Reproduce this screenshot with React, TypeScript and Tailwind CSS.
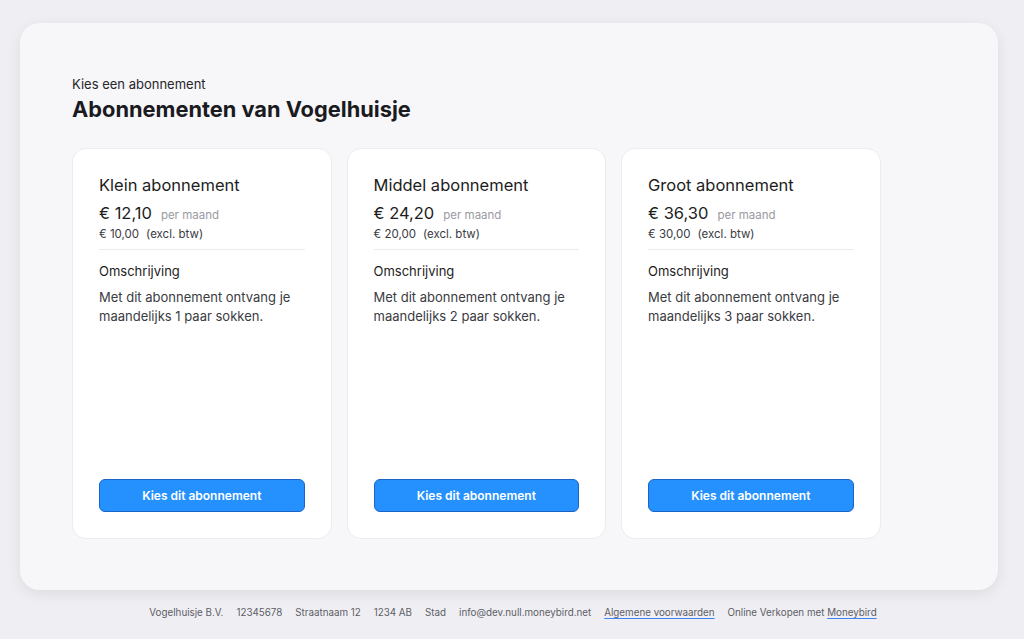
const plans = [
  { name: 'Klein abonnement', price: '€ 12,10', excl: '€ 10,00', count: 1 },
  { name: 'Middel abonnement', price: '€ 24,20', excl: '€ 20,00', count: 2 },
  { name: 'Groot abonnement', price: '€ 36,30', excl: '€ 30,00', count: 3 },
];

const PlanCard = ({ plan }: { plan: (typeof plans)[number] }) => (
  <div className="flex h-[391px] w-[259.5px] flex-col rounded-[14px] border border-[#ececf0] bg-white px-[26px] pt-[25px] pb-[26px]">
    <h3 className="text-[16.5px] leading-[22px] text-[#1d1d22]">{plan.name}</h3>
    <div className="mt-[6px] flex items-baseline gap-[9px]">
      <span className="text-[16.5px] leading-[22px] text-[#1d1d22]">{plan.price}</span>
      <span className="text-[11.5px] text-[#9a9aa2]">per maand</span>
    </div>
    <p className="mt-[2px] text-[11.5px] leading-[16px] text-[#3b3b42]">
      {plan.excl}
      <span className="ml-[7px]">(excl. btw)</span>
    </p>
    <div className="mt-[7px] border-t border-[#ececf0]" />
    <h4 className="mt-[12px] text-[13px] leading-[18px] text-[#1d1d22]">Omschrijving</h4>
    <p className="mt-[8px] text-[13px] leading-[19px] text-[#3b3b42]">
      Met dit abonnement ontvang je maandelijks {plan.count} paar sokken.
    </p>
    <button className="mt-auto h-[33px] w-full rounded-[6px] border border-[#1b63c6] bg-[#2491ff] text-[12px] font-semibold text-white">
      Kies dit abonnement
    </button>
  </div>
);

export default function App() {
  return (
    <div
      className="flex min-h-[639px] flex-col bg-[#efeff3] pt-[23px]"
      style={{ fontFamily: 'Inter, "Noto Sans", sans-serif' }}
    >
      <div className="ml-[20px] h-[567px] w-[978px] rounded-[20px] bg-[#f7f7f9] px-[52px] pt-[53px] shadow-[0_4px_14px_rgba(0,0,0,0.08)]">
        <p className="text-[13px] leading-[16px] text-[#26262b]">Kies een abonnement</p>
        <h1 className="mt-[3px] text-[21.8px] font-bold leading-[28px] text-[#1a1a1f]">
          Abonnementen van Vogelhuisje
        </h1>
        <div className="mt-[25px] flex gap-[15px]">
          {plans.map(p => (
            <PlanCard key={p.name} plan={p} />
          ))}
        </div>
      </div>

      <footer className="mt-[16px] flex justify-center gap-[13px] pl-[2px] text-[9.8px] leading-[14px] text-[#5d5d66]">
        <span>Vogelhuisje B.V.</span>
        <span>12345678</span>
        <span>Straatnaam 12</span>
        <span>1234 AB</span>
        <span>Stad</span>
        <span>info@dev.null.moneybird.net</span>
        <a className="underline decoration-[#3b82f6] underline-offset-2">Algemene voorwaarden</a>
        <span>
          Online Verkopen met <a className="underline decoration-[#3b82f6] underline-offset-2">Moneybird</a>
        </span>
      </footer>
    </div>
  );
}
